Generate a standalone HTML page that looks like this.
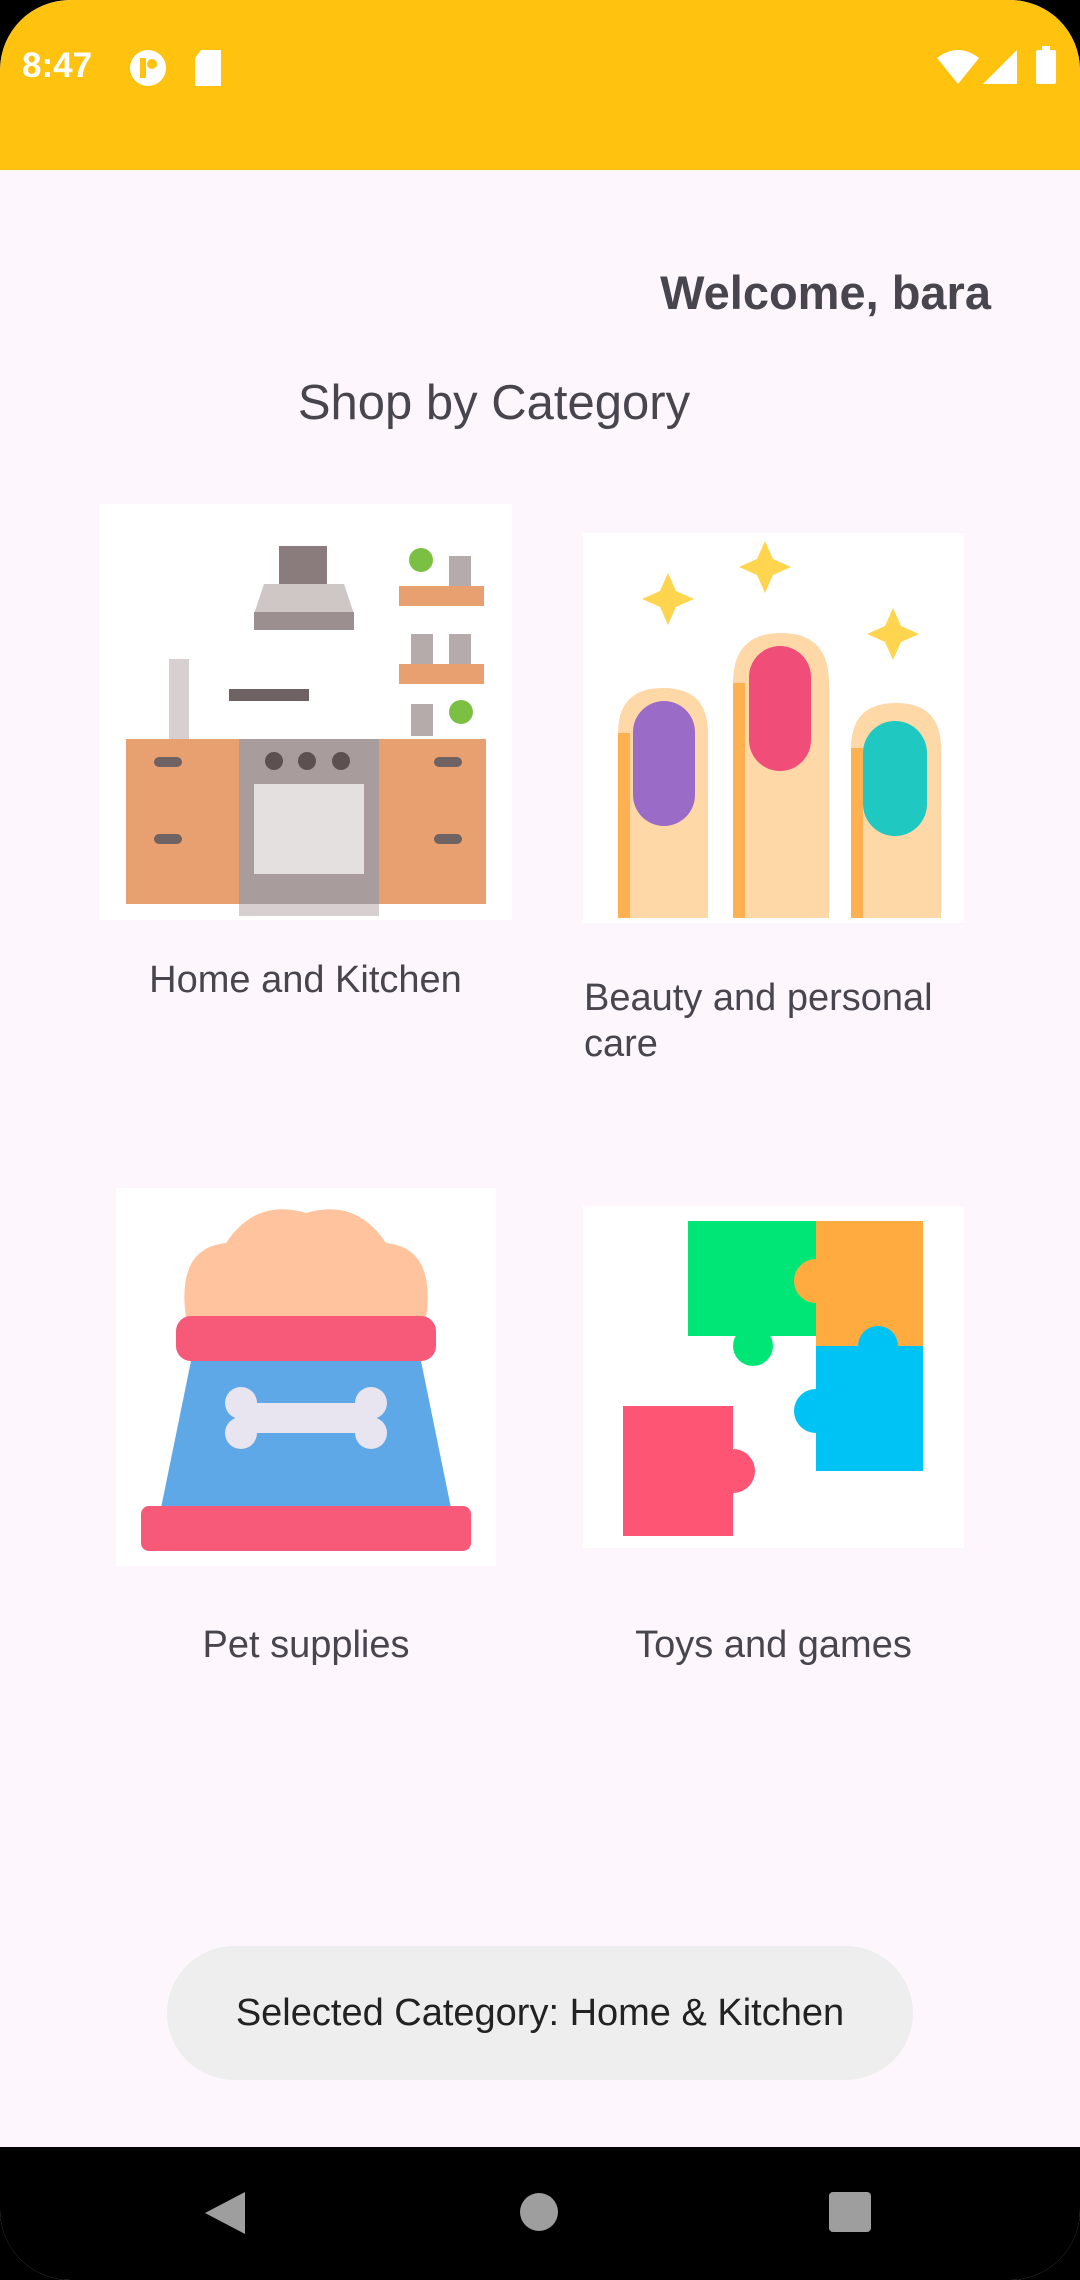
<!DOCTYPE html>
<html><head><meta charset="utf-8"><style>
*{margin:0;padding:0;box-sizing:border-box}
body{width:1080px;height:2280px;background:#000;font-family:"Liberation Sans",Roboto,sans-serif;overflow:hidden;position:relative}
.screen{position:absolute;left:0;top:0;width:1080px;height:2280px;background:#FDF7FD;border-radius:70px 70px 70px 70px;overflow:hidden}
.status{position:absolute;left:0;top:0;width:1080px;height:170px;background:#FFC20E;border-radius:70px 70px 0 0}
.t{position:absolute;color:#49454F;white-space:nowrap}
.nav{position:absolute;left:0;top:2147px;width:1080px;height:133px;background:#000}
</style></head><body>
<div class="screen">
<div class="status">
 <div style="position:absolute;left:22px;top:46px;color:#fff;font-weight:bold;font-size:35px">8:47</div>
 <svg style="position:absolute;left:128px;top:48px" width="40" height="40" viewBox="0 0 40 40"><circle cx="20" cy="20" r="18" fill="#fff"/><rect x="12" y="10" width="6" height="20" fill="#FFC20E"/><circle cx="24" cy="16" r="5" fill="#FFC20E"/></svg>
 <svg style="position:absolute;left:193px;top:50px" width="30" height="36" viewBox="0 0 30 36"><path d="M8 0H28V36H2V8Z" fill="#fff"/></svg>
 <svg style="position:absolute;left:937px;top:50px" width="42" height="34" viewBox="0 0 42 34"><path d="M0 8Q21-8 42 8L21 34Z" fill="#fff"/></svg>
 <svg style="position:absolute;left:983px;top:50px" width="34" height="34" viewBox="0 0 34 34"><path d="M34 0V34H0Z" fill="#fff"/></svg>
 <svg style="position:absolute;left:1036px;top:46px" width="20" height="38" viewBox="0 0 20 38"><rect x="6" y="0" width="8" height="4" fill="#fff"/><rect x="0" y="4" width="20" height="34" rx="2" fill="#fff"/></svg>
</div>
<div class="t" style="right:89px;top:265px;font-size:47px;font-weight:bold">Welcome, bara</div>
<div class="t" style="left:0;width:988px;text-align:center;top:375px;font-size:49px">Shop by Category</div>

<!-- Kitchen -->
<svg style="position:absolute;left:99px;top:504px" width="413" height="416" viewBox="0 0 413 416">
<rect width="413" height="416" fill="#fff"/>
<rect x="180" y="42" width="48" height="38" fill="#8A7C7C"/><path d="M165 80H245L255 110H155Z" fill="#CFC6C6"/><rect x="155" y="108" width="100" height="18" fill="#9C8F8F"/>
<rect x="300" y="82" width="85" height="20" fill="#E8A070"/><rect x="300" y="160" width="85" height="20" fill="#E8A070"/>
<circle cx="322" cy="56" r="12" fill="#7BC043"/><rect x="350" y="52" width="22" height="30" fill="#B5ABAB"/>
<rect x="312" y="130" width="22" height="30" fill="#B5ABAB"/><rect x="350" y="130" width="22" height="30" fill="#B5ABAB"/>
<rect x="312" y="200" width="22" height="32" fill="#B5ABAB"/><circle cx="362" cy="208" r="12" fill="#7BC043"/>
<rect x="70" y="155" width="20" height="80" fill="#D8D0D0"/><rect x="130" y="185" width="80" height="12" fill="#6E6262"/>
<rect x="27" y="235" width="360" height="165" fill="#E8A070"/>
<rect x="140" y="235" width="140" height="165" fill="#A99C9C"/><rect x="155" y="280" width="110" height="90" fill="#E5E0E0"/>
<circle cx="175" cy="257" r="9" fill="#5C5050"/><circle cx="208" cy="257" r="9" fill="#5C5050"/><circle cx="242" cy="257" r="9" fill="#5C5050"/>
<rect x="55" y="253" width="28" height="10" rx="5" fill="#6E6262"/><rect x="55" y="330" width="28" height="10" rx="5" fill="#6E6262"/>
<rect x="335" y="253" width="28" height="10" rx="5" fill="#6E6262"/><rect x="335" y="330" width="28" height="10" rx="5" fill="#6E6262"/>
<rect x="140" y="400" width="140" height="12" fill="#D8D0D0"/>
</svg>
<div class="t" style="left:99px;width:413px;text-align:center;top:959px;font-size:38px">Home and Kitchen</div>

<!-- Beauty -->
<svg style="position:absolute;left:583px;top:533px" width="381" height="390" viewBox="0 0 381 390">
<rect width="381" height="390" fill="#fff"/>
<path d="M85 40l8 18 18 8-18 8-8 18-8-18-18-8 18-8z" fill="#FFD54F"/>
<path d="M198 40l8 18 18 8-18 8-8 18-8-18-18-8 18-8z" transform="translate(-16,-32)" fill="#FFD54F"/>
<path d="M310 105l8 18 18 8-18 8-8 18-8-18-18-8 18-8z" transform="translate(0,-30)" fill="#FFD54F"/>
<path d="M35 385V200Q35 155 80 155Q125 155 125 200V385Z" fill="#FFD8A8"/>
<rect x="35" y="200" width="12" height="185" fill="#FFB050"/>
<rect x="50" y="168" width="62" height="125" rx="31" fill="#9B6BC8"/>
<path d="M150 385V150Q150 100 198 100Q246 100 246 150V385Z" fill="#FFD8A8"/>
<rect x="150" y="150" width="12" height="235" fill="#FFB050"/>
<rect x="166" y="113" width="62" height="125" rx="31" fill="#F04E78"/>
<path d="M268 385V215Q268 170 313 170Q358 170 358 215V385Z" fill="#FFD8A8"/>
<rect x="268" y="215" width="12" height="170" fill="#FFB050"/>
<rect x="280" y="188" width="64" height="115" rx="32" fill="#1FC8C0"/>
</svg>
<div class="t" style="left:584px;top:975px;font-size:38px;line-height:46px">Beauty and personal<br>care</div>

<!-- Pet -->
<svg style="position:absolute;left:116px;top:1188px" width="380" height="378" viewBox="0 0 380 378">
<rect width="380" height="378" fill="#fff"/>
<path d="M70 130Q60 60 110 55Q140 10 190 25Q240 10 270 55Q320 60 310 130Z" fill="#FFC39E"/>
<rect x="60" y="128" width="260" height="45" rx="15" fill="#F75A78"/>
<path d="M75 173H305L335 320H45Z" fill="#5EA8E8"/>
<rect x="25" y="318" width="330" height="45" rx="8" fill="#F75A78"/>
<rect x="125" y="215" width="130" height="30" rx="15" fill="#E8E4F0"/>
<circle cx="125" cy="215" r="16" fill="#E8E4F0"/><circle cx="125" cy="245" r="16" fill="#E8E4F0"/>
<circle cx="255" cy="215" r="16" fill="#E8E4F0"/><circle cx="255" cy="245" r="16" fill="#E8E4F0"/>
</svg>
<div class="t" style="left:116px;width:380px;text-align:center;top:1624px;font-size:38px">Pet supplies</div>

<!-- Toys -->
<svg style="position:absolute;left:583px;top:1206px" width="381" height="342" viewBox="0 0 381 342">
<rect width="381" height="342" fill="#fff"/>
<path d="M105 15H233V130H105Z" fill="#00E676"/>
<path d="M233 15H340V140H233Z" fill="#FFAB40"/>
<path d="M233 140H340V265H233Z" fill="#00C3F5"/>
<path d="M40 200H150V330H40Z" fill="#FF5574"/>
<circle cx="170" cy="140" r="20" fill="#00E676"/><circle cx="233" cy="75" r="22" fill="#FFAB40"/>
<circle cx="295" cy="140" r="20" fill="#00C3F5"/><circle cx="233" cy="205" r="22" fill="#00C3F5"/>
<circle cx="150" cy="265" r="22" fill="#FF5574"/>
</svg>
<div class="t" style="left:583px;width:381px;text-align:center;top:1624px;font-size:38px">Toys and games</div>

<div style="position:absolute;left:167px;top:1946px;width:746px;height:134px;background:#EEEEEE;border-radius:67px;text-align:center;line-height:134px;font-size:38px;color:#222">Selected Category: Home &amp; Kitchen</div>

<div class="nav">
 <svg style="position:absolute;left:205px;top:45px" width="40" height="42" viewBox="0 0 40 42"><path d="M40 0V42L0 21Z" fill="#9E9E9E"/></svg>
 <div style="position:absolute;left:520px;top:46px;width:38px;height:38px;border-radius:50%;background:#9E9E9E"></div>
 <div style="position:absolute;left:829px;top:45px;width:42px;height:40px;border-radius:4px;background:#9E9E9E"></div>
</div>
</div>
</body></html>
